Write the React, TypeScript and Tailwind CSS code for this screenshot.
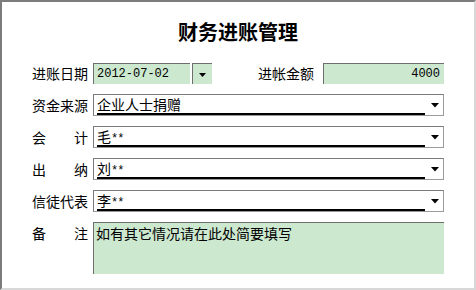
import React from "react";

const cjk = { fontFamily: "'Noto Sans CJK SC', 'Noto Sans', sans-serif" };
const mono = { fontFamily: "'Liberation Mono', 'Noto Sans CJK SC', monospace" };

function Label({ chars }: { chars: string[] }) {
  return (
    <div className="w-[56px] mr-[5px] h-[20px] flex items-center justify-between text-[14px] leading-[20px] text-black shrink-0" style={cjk}>
      {chars.map((c, i) => (
        <span key={i}>{c}</span>
      ))}
    </div>
  );
}

function Arrow() {
  return (
    <svg width="8" height="5" viewBox="0 0 8 5" className="block">
      <polygon points="0,0 8,0 4,4.5" fill="#000" />
    </svg>
  );
}

function Combo({ text }: { text: React.ReactNode }) {
  return (
    <div className="relative w-[351px] h-[22px] bg-white border border-[#9a9a9a] border-t-[#7a7a7a] border-l-[#7a7a7a] flex items-center shrink-0">
      <div className="ml-[3px] w-[328px] h-[19px] border-b-2 border-black text-[14px] leading-[17px] text-black whitespace-nowrap" style={cjk}>
        {text}
      </div>
      <div className="absolute right-[4px] top-[8px]">
        <Arrow />
      </div>
    </div>
  );
}

function Stars({ name }: { name: string }) {
  return (
    <span>
      {name}
      <span style={mono} className="text-[12px] tracking-[-1px]">**</span>
    </span>
  );
}

export default function App() {
  return (
    <div className="w-[476px] h-[290px] bg-white border-l-2 border-t-2 border-r-2 border-b-2 border-l-[#7c7c7c] border-t-[#7c7c7c] border-r-[#d8d8d8] border-b-[#d8d8d8] flex flex-col" style={cjk}>
      <div className="pt-[17px] h-[43px] flex justify-center">
        <div className="h-[26px] leading-[26px] text-[20px] font-bold text-black tracking-[0px]">财务进账管理</div>
      </div>
      <div className="mt-[17px] pl-[30px] flex flex-col gap-[10px]">
        <div className="flex items-center h-[22px]">
          <Label chars={["进", "账", "日", "期"]} />
          <div className="w-[97px] h-[21px] bg-[#cce8cf] border-l border-t border-[#6e6e6e] flex items-center pl-[3px] text-[12px] text-black shrink-0" style={mono}>
            2012-07-02
          </div>
          <div className="ml-[2px] w-[20px] h-[21px] bg-[#cce8cf] border-l border-t border-[#6e6e6e] flex items-center justify-center shrink-0">
            <svg width="7" height="4" viewBox="0 0 7 4" className="block mt-[2px]">
              <polygon points="0,0 7,0 3.5,4" fill="#000" />
            </svg>
          </div>
          <div className="ml-[46px]">
            <div className="w-[56px] mr-[9px] h-[20px] flex items-center justify-between text-[14px] leading-[20px] text-black">
              <span>进</span>
              <span>帐</span>
              <span>金</span>
              <span>额</span>
            </div>
          </div>
          <div className="w-[121px] h-[21px] bg-[#cce8cf] border-l border-t border-[#6e6e6e] flex items-center justify-end pr-[4px] text-[12px] text-black shrink-0" style={mono}>
            4000
          </div>
        </div>
        <div className="flex items-center h-[22px]">
          <Label chars={["资", "金", "来", "源"]} />
          <Combo text="企业人士捐赠" />
        </div>
        <div className="flex items-center h-[22px]">
          <Label chars={["会", "计"]} />
          <Combo text={<Stars name="毛" />} />
        </div>
        <div className="flex items-center h-[22px]">
          <Label chars={["出", "纳"]} />
          <Combo text={<Stars name="刘" />} />
        </div>
        <div className="flex items-center h-[22px]">
          <Label chars={["信", "徒", "代", "表"]} />
          <Combo text={<Stars name="李" />} />
        </div>
        <div className="flex items-start">
          <div className="pt-[1px]">
            <Label chars={["备", "注"]} />
          </div>
          <div className="w-[351px] h-[52px] bg-[#cce8cf] border-l border-t border-[#6e6e6e] pl-[2px] text-[14px] leading-[20px] text-black shrink-0">
            如有其它情况请在此处简要填写
          </div>
        </div>
      </div>
    </div>
  );
}
